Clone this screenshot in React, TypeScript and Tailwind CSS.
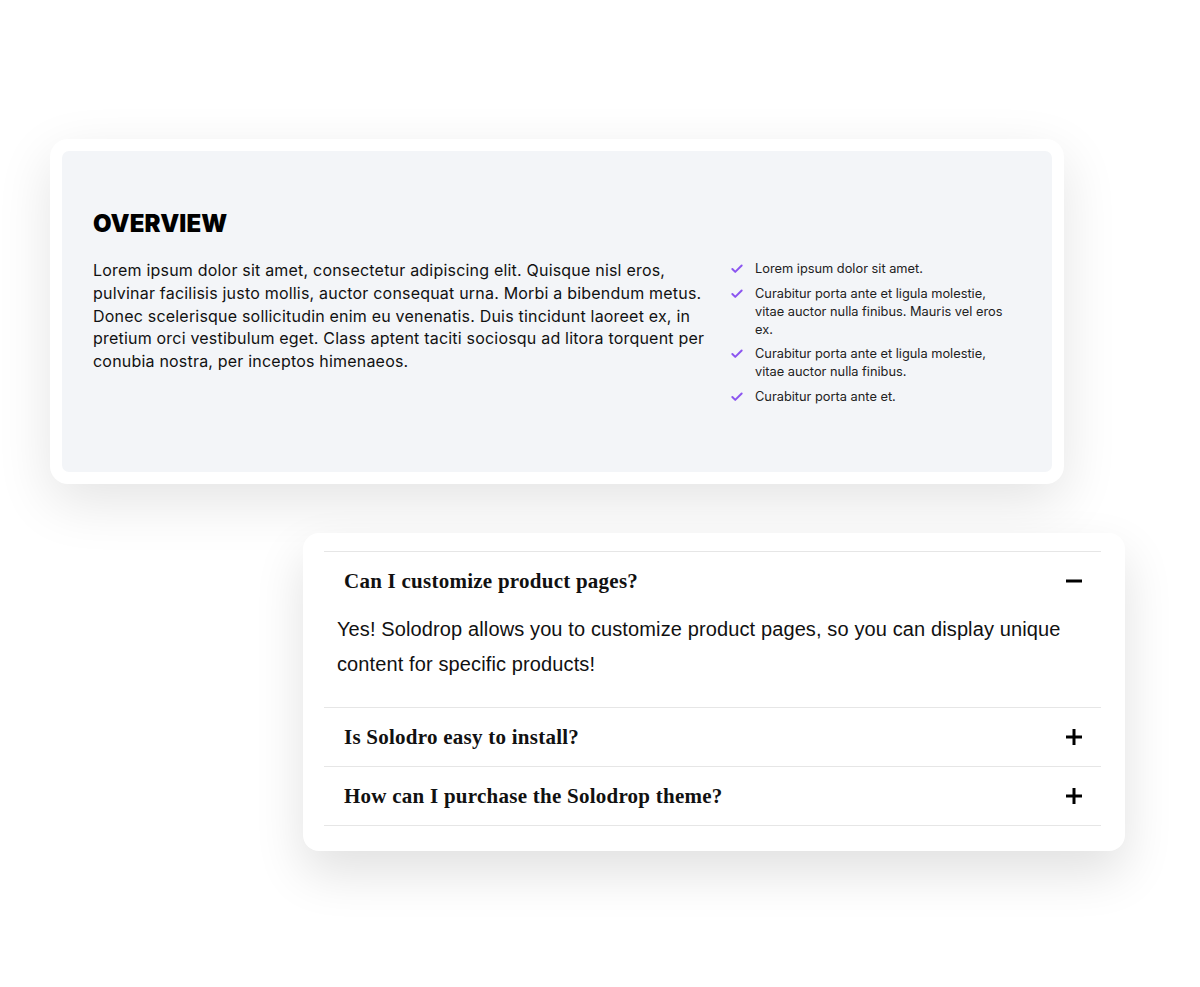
import { Check } from 'lucide-react';

const paragraph = [
  'Lorem ipsum dolor sit amet, consectetur adipiscing elit. Quisque nisl eros,',
  'pulvinar facilisis justo mollis, auctor consequat urna. Morbi a bibendum metus.',
  'Donec scelerisque sollicitudin enim eu venenatis. Duis tincidunt laoreet ex, in',
  'pretium orci vestibulum eget. Class aptent taciti sociosqu ad litora torquent per',
  'conubia nostra, per inceptos himenaeos.',
];

const checklist = [
  ['Lorem ipsum dolor sit amet.'],
  ['Curabitur porta ante et ligula molestie,', 'vitae auctor nulla finibus. Mauris vel eros', 'ex.'],
  ['Curabitur porta ante et ligula molestie,', 'vitae auctor nulla finibus.'],
  ['Curabitur porta ante et.'],
];

const faqs = [
  {
    q: 'Can I customize product pages?',
    a: [
      'Yes! Solodrop allows you to customize product pages, so you can display unique',
      'content for specific products!',
    ],
    open: true,
  },
  { q: 'Is Solodro easy to install?', a: [], open: false },
  { q: 'How can I purchase the Solodrop theme?', a: [], open: false },
];

const ToggleIcon = ({ open }: { open: boolean }) => (
  <svg width="16" height="16" viewBox="0 0 16 16" className="shrink-0">
    <path d="M0 8h16" stroke="#000" strokeWidth="3" />
    {!open && <path d="M8 0v16" stroke="#000" strokeWidth="3" />}
  </svg>
);

const App = () => {
  return (
    <div className="min-h-[987px] bg-white pt-[139px] font-['Inter',sans-serif] text-black">
      {/* Overview card */}
      <div className="ml-[50px] w-[1014px] rounded-[18px] bg-white p-[12px] shadow-[0_18px_55px_rgba(0,0,0,0.11)]">
        <div className="flex h-[321px] gap-[20px] rounded-[7px] bg-[#f3f5f8] pl-[31px] pt-[58px]">
          <div className="w-[617px]">
            <h2 className="text-[24px] font-black leading-[30px] tracking-[0.1px]">OVERVIEW</h2>
            <p className="mt-[20px] text-[16px] leading-[22.75px] tracking-[0.2px] text-[#111]">
              {paragraph.map((line) => (
                <span key={line} className="block whitespace-nowrap">
                  {line}
                </span>
              ))}
            </p>
          </div>
          <ul className="mt-[51px] flex w-[290px] flex-col gap-[6.5px]">
            {checklist.map((item, i) => (
              <li key={i} className="flex gap-[11px] text-[12.8px] leading-[18px] text-[#222]">
                <Check size={14} strokeWidth={3.4} className="mt-[2px] shrink-0 text-[#8b55f0]" />
                <span>
                  {item.map((line) => (
                    <span key={line} className="block whitespace-nowrap">
                      {line}
                    </span>
                  ))}
                </span>
              </li>
            ))}
          </ul>
        </div>
      </div>

      {/* FAQ card */}
      <div className="ml-[303px] mt-[49px] w-[822px] rounded-[16px] bg-white pb-[25px] pl-[21px] pr-[24px] pt-[18px] shadow-[0_22px_50px_rgba(0,0,0,0.12)]">
        <div className="border-t border-[#e6e6e6]">
          {faqs.map((f) => (
            <div key={f.q} className="border-b border-[#e6e6e6]">
              <div className="flex h-[58px] items-center justify-between pl-[20px] pr-[19px]">
                <span className="pt-[2px] font-['Liberation_Serif',serif] text-[21px] font-bold tracking-[0.25px] text-[#111]">
                  {f.q}
                </span>
                <ToggleIcon open={f.open} />
              </div>
              {f.open && (
                <div className="pb-[25px] pl-[13px] pt-[2px] font-['Liberation_Sans',sans-serif] text-[20px] leading-[35px] tracking-[0.12px] text-[#111]">
                  {f.a.map((line) => (
                    <span key={line} className="block whitespace-nowrap">
                      {line}
                    </span>
                  ))}
                </div>
              )}
            </div>
          ))}
        </div>
      </div>
    </div>
  );
};

export default App;
